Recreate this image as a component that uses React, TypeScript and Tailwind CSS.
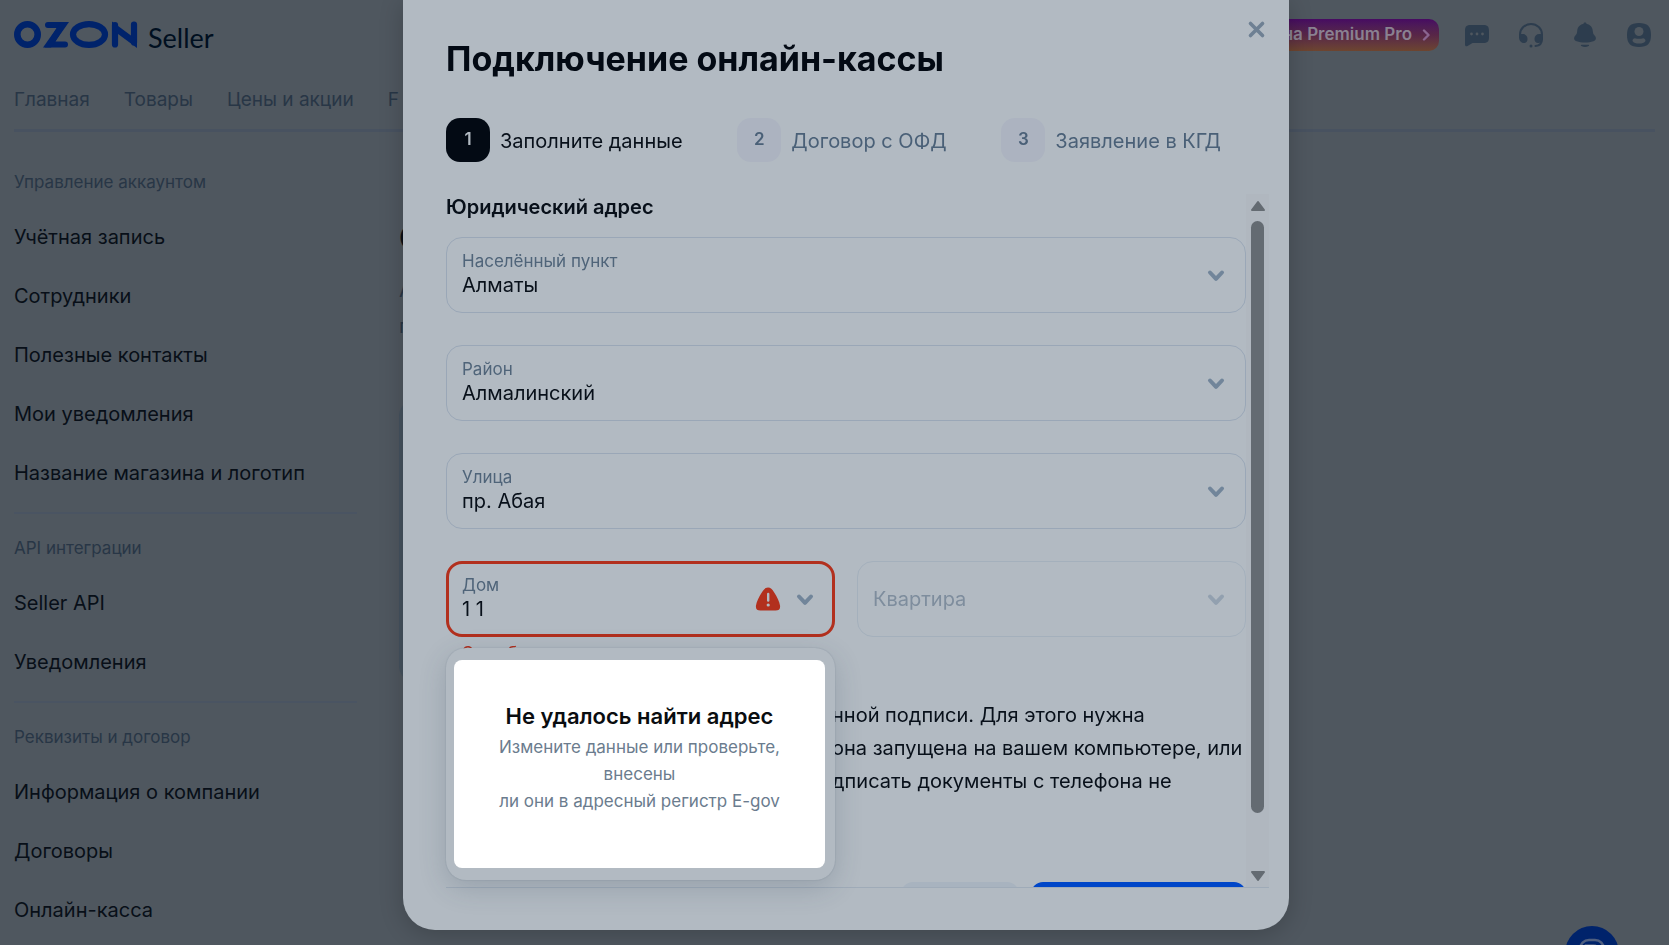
import { useId } from "react";
import type { ReactNode } from "react";

const menu = [
  {
    title: "Управление аккаунтом",
    items: ["Учётная запись", "Сотрудники", "Полезные контакты", "Мои уведомления", "Название магазина и логотип"],
  },
  { title: "API интеграции", items: ["Seller API", "Уведомления"] },
  { title: "Реквизиты и договор", items: ["Информация о компании", "Договоры", "Онлайн-касса"] },
];

function OzonLogo() {
  return (
    <svg width="124" height="28" viewBox="0 0 124 28" fill="none" stroke="#00236b" aria-label="OZON" role="img">
      <circle cx="13.5" cy="13.5" r="10.2" strokeWidth="6.6" />
      <path d="M34 4h14L36 23.6h15" strokeWidth="6" strokeLinecap="round" />
      <path d="M47 1h8L37 26.5h-8z" fill="#00236b" stroke="none" />
      <ellipse cx="75" cy="13.5" rx="16" ry="10.4" strokeWidth="6.2" />
      <path d="M101 4v19.5M120 3.5v18" strokeWidth="6.2" strokeLinecap="round" />
      <path d="M98 0.5l25 18.5v8L98 8.6z" fill="#00236b" stroke="none" />
    </svg>
  );
}

function Chevron({ muted = false }: { muted?: boolean }) {
  return (
    <svg className="mt-0.5 shrink-0" width="18" height="14" viewBox="0 0 18 14" fill="none" stroke={muted ? "#92a0af" : "#71859a"} strokeWidth="4" strokeLinecap="round" strokeLinejoin="round">
      <path d="M3 3.5l6 6.4 6-6.4" />
    </svg>
  );
}

function ChatIcon() {
  return (
    <svg width="26" height="26" viewBox="0 0 26 26">
      <path d="M7 3h12c4.500 0 6 1.500 6 6v6c0 4.500-1.500 6-6 6H8.500L3.500 24C2 24.700 1 24 1 22.500V9c0-4.500 1.500-6 6-6z" fill="#2d3d4e" />
      <g fill="#4f575f">
        <circle cx="7.500" cy="12" r="1.400" />
        <circle cx="13" cy="12" r="1.400" />
        <circle cx="18.500" cy="12" r="1.400" />
      </g>
    </svg>
  );
}

function HeadsetIcon() {
  return (
    <svg width="26" height="26" viewBox="0 0 26 26" fill="none">
      <path d="M2 14v-1.500a11 10.500 0 0 1 22 0V17c0 4-2.200 6.700-6.500 7" stroke="#2d3d4e" strokeWidth="2" strokeLinecap="round" />
      <path d="M1 12h3.500c3.200 0 5 2 5 5 0 2.500-1.500 4-3.500 4-3 0-5-2.500-5-6zM25 12h-3.500c-3.200 0-5 2-5 5 0 2.500 1.500 4 3.500 4 3 0 5-2.500 5-6z" fill="#2d3d4e" />
      <circle cx="13" cy="24" r="1.500" fill="#2d3d4e" />
    </svg>
  );
}

function BellIcon() {
  return (
    <svg width="26" height="26" viewBox="0 0 26 26" fill="#2d3d4e">
      <path d="M13 0.500c1 0 1.500.6 1.700 1.600C18.800 2.800 20.500 5.700 20.800 9.200c.2 2.300.8 3.200 2 4.500 1.900 2.200 1.300 4.500-1.500 5.600-2.300.9-5.200 1.300-8.300 1.300s-6-.4-8.300-1.300c-2.800-1.100-3.400-3.400-1.500-5.600 1.200-1.300 1.800-2.200 2-4.500.3-3.500 2-6.400 6.100-7.100C11.500 1.100 12 .5 13 .5z" />
      <path d="M9.500 22.800h7c.8 0 .8.900.1 1.300-2 1.200-5.200 1.200-7.200 0-.7-.4-.7-1.300.1-1.300z" />
    </svg>
  );
}

function UserIcon() {
  return (
    <svg width="26" height="26" viewBox="0 0 26 26">
      <path d="M13 1c8.500 0 12 3.500 12 12s-3.500 12-12 12S1 21.500 1 13 4.500 1 13 1z" fill="#2d3d4e" />
      <circle cx="13" cy="9.500" r="4.500" fill="#4f575f" />
      <path d="M6.500 19c0-1.800 1.500-3 3-2.600 2.300.6 4.700.6 7 0 1.500-.4 3 .8 3 2.600-1 1.800-3.600 2.600-6.500 2.600s-5.500-.8-6.500-2.600z" fill="#4f575f" />
    </svg>
  );
}

function WarningIcon() {
  return (
    <svg className="shrink-0" width="26" height="26" viewBox="0 0 26 26">
      <path d="M13 1.500c2.600 0 4.200 1.800 6.200 4.900C22 10.700 24.500 15.400 25 19.500c.5 3.400-1 5-4.500 5h-15c-3.500 0-5-1.600-4.500-5 .5-4.100 3-8.800 5.800-13.100 2-3.100 3.600-4.900 6.200-4.900z" fill="#b2301e" />
      <path d="M13.200 8v6.500" stroke="#b2bac2" strokeWidth="2.400" strokeLinecap="round" />
      <circle cx="13.200" cy="19" r="1.600" fill="#b2bac2" />
    </svg>
  );
}

function Field({ label, value }: { label: string; value: string }) {
  const id = useId();
  return (
    <div className="flex h-19 items-center rounded-2xl border border-[#9aa7b7] pr-5 pl-[15px]">
      <div className="flex min-w-0 flex-1 flex-col pb-1">
        <label htmlFor={id} className="text-[17px] leading-6 text-[#4f6479]">{label}</label>
        <select id={id} className="w-full appearance-none bg-transparent text-xl leading-6 text-[#08101a] outline-none">
          <option>{value}</option>
        </select>
      </div>
      <Chevron />
    </div>
  );
}

function Step({ n, active = false, children }: { n: number; active?: boolean; children: ReactNode }) {
  return (
    <li className={`flex items-center gap-2.5 ${active ? "text-[#08101a]" : "text-[#4a6077]"}`}>
      <span className={`flex size-11 items-center justify-center rounded-[14px] text-[17px] font-semibold ${active ? "bg-[#030a14] text-[#b2bac2]" : "bg-[#acb3c0]"}`}>{n}</span>
      <span className="pt-px whitespace-nowrap">{children}</span>
    </li>
  );
}

export default function App() {
  return (
    <div className="relative h-screen overflow-hidden bg-[#4f575f] font-['Inter',sans-serif] text-xl text-[#080f18]">
      <header className="mx-3.5 border-b-3 border-[#485260]">
        <div className="flex h-[70px] items-center justify-between">
          <a href="#" className="flex items-center gap-2.5">
            <OzonLogo />
            <span className="pt-1.5 font-['Lato',sans-serif] text-[27px] leading-8 text-[#000f20]">Seller</span>
          </a>
          <div className="flex items-center gap-[25px]">
            <button className="flex h-8 w-64 items-center justify-end gap-2.5 rounded-[10px] bg-linear-to-t from-[#6d452f] via-[#582647] to-[#470a62] pr-2 text-[17px] font-semibold whitespace-nowrap text-[#8a8191]">
              Подписка на Premium Pro
              <svg width="9" height="12" viewBox="0 0 9 12" fill="none" stroke="#8a6490" strokeWidth="2.400" strokeLinecap="round" strokeLinejoin="round">
                <path d="M2 1.500L6.500 6 2 10.500" />
              </svg>
            </button>
            <div className="flex items-center gap-7 pr-[3px]">
              <button aria-label="Чат"><ChatIcon /></button>
              <button aria-label="Поддержка"><HeadsetIcon /></button>
              <button aria-label="Уведомления"><BellIcon /></button>
              <button aria-label="Профиль"><UserIcon /></button>
            </div>
          </div>
        </div>
        <nav className="flex h-[59px] items-center gap-[34px] pt-0.5 text-[19px] text-[#283646]">
          <a href="#">Главная</a>
          <a href="#">Товары</a>
          <a href="#">Цены и акции</a>
          <a href="#">F</a>
        </nav>
      </header>

      <div className="flex">
        <aside className="ml-3.5 w-[343px] shrink-0 pt-[33px]">
          {menu.map((group, i) => (
            <section key={group.title} className={i < menu.length - 1 ? "mb-[17px] border-b-2 border-[#4a5462] pb-2.5" : ""}>
              <h2 className="flex h-9 items-center text-[17px] text-[#283646]">{group.title}</h2>
              <ul className="pt-1.5">
                {group.items.map((item) => (
                  <li key={item} className="flex h-[59px] items-center">
                    <a href="#">{item}</a>
                  </li>
                ))}
              </ul>
            </section>
          ))}
        </aside>
        <main className="flex-1 pt-[82px] pl-[42px]">
          <h1 className="text-[34px] leading-12 font-bold">О</h1>
          <p className="pt-2.5 leading-9 text-[#283646]">А<br />п</p>
          <div className="mt-14 h-[282px] w-1/2 rounded-2xl bg-[#45525e]" />
        </main>
      </div>

      <button aria-label="Помощник" className="fixed right-[50px] -bottom-[35px] flex size-[54px] items-start justify-center rounded-full bg-[#00236b] pt-3">
        <svg width="28" height="28" viewBox="0 0 28 28" fill="none" stroke="#4f5f80" strokeWidth="2.500">
          <rect x="2" y="2" width="24" height="24" rx="9" />
          <path d="M8 18V7.500h7c3.500 0 5 1.500 5 4.500" />
        </svg>
      </button>

      <div className="fixed inset-0 flex justify-center pb-[15px] pl-[23px]">
        <div role="dialog" aria-labelledby="dialog-title" className="relative flex h-full w-[886px] flex-col rounded-b-[32px] bg-[#b2bac2] pr-5 pb-[42px] pl-[43px] shadow-[0_4px_24px_rgba(0,0,0,0.2)]">
          <button aria-label="Закрыть" className="absolute top-5 right-[22px] flex size-5 items-center justify-center">
            <svg width="20" height="20" viewBox="0 0 20 20" stroke="#6e8093" strokeWidth="3.600" strokeLinecap="round">
              <path d="M3.500 3.500l12 12M15.500 3.500l-12 12" />
            </svg>
          </button>
          <h2 id="dialog-title" className="pt-9 text-[34px] leading-[46px] font-bold text-[#030a14]">Подключение онлайн-кассы</h2>
          <ol className="mt-9 mr-12 flex justify-between">
            <Step n={1} active>Заполните данные</Step>
            <Step n={2}>Договор с ОФД</Step>
            <Step n={3}>Заявление в КГД</Step>
          </ol>

          <div className="relative mt-8 flex min-h-0 flex-1 border-b border-[#9fabb8]">
            <div className="min-w-0 flex-1 overflow-hidden">
              <h3 className="mb-4 leading-[27px] font-semibold text-[#08101a]">Юридический адрес</h3>
              <form className="flex flex-col gap-8">
                <Field label="Населённый пункт" value="Алматы" />
                <Field label="Район" value="Алмалинский" />
                <Field label="Улица" value="пр. Абая" />
                <div className="grid grid-cols-2 gap-[22px]">
                  <div>
                    <div className="flex h-19 items-center rounded-2xl border-3 border-[#b2301e] pr-[18px] pl-[13px]">
                      <div className="flex min-w-0 flex-1 flex-col pb-1">
                        <label htmlFor="house" className="text-[17px] leading-6 text-[#4f6479]">Дом</label>
                        <input id="house" defaultValue="1 1" className="w-full bg-transparent leading-6 text-[#08101a] outline-none" />
                      </div>
                      <WarningIcon />
                      <span className="w-[15px]" />
                      <Chevron />
                    </div>
                    <p className="h-0 pt-1 pl-4 text-[17px] leading-6 text-[#b2301e]">Это обязательное поле</p>
                  </div>
                  <div className="flex h-19 items-center rounded-2xl border border-[#a4b0bc] pr-5 pl-[15px]">
                    <select aria-label="Квартира" disabled className="min-w-0 flex-1 appearance-none bg-transparent text-xl text-[#7e8d9d] opacity-100">
                      <option>Квартира</option>
                    </select>
                    <Chevron muted />
                  </div>
                </div>
                <p className="mt-[26px] pl-[386px] leading-[33px] whitespace-nowrap text-[#08101a]">
                  нной подписи. Для этого нужна<br />
                  она запущена на вашем компьютере, или<br />
                  дписать документы с телефона не
                </p>
                <div className="mt-13 flex justify-end gap-3">
                  <button type="button" aria-label="Отмена" className="h-12 w-[118px] rounded-xl bg-[#a8b3bf]" />
                  <button type="submit" aria-label="Продолжить" className="h-12 w-[215px] rounded-xl bg-[#0046c8]" />
                </div>
              </form>
            </div>
            <div className="flex w-[23px] flex-col items-center bg-[#b0b7bf] pt-1.5 pb-[5px]" aria-hidden="true">
              <svg width="16" height="12" viewBox="0 0 16 12" fill="#646b72" stroke="#646b72" strokeWidth="2" strokeLinejoin="round">
                <path d="M8 2l6 8H2z" />
              </svg>
              <div className="mt-[9px] w-[13px] flex-1 rounded-full bg-[#646b72]" />
              <div className="h-[57px]" />
              <svg width="16" height="12" viewBox="0 0 16 12" fill="#646b72" stroke="#646b72" strokeWidth="2" strokeLinejoin="round">
                <path d="M8 10l6-8H2z" />
              </svg>
            </div>
            <div role="status" className="absolute top-[454px] left-0 w-[389px] rounded-[20px] bg-[#b2bac2] px-2 py-3 shadow-[0_8px_28px_rgba(40,60,80,0.2),0_0_2px_rgba(40,60,80,0.2)]">
              <div className="mr-0.5 flex h-[208px] flex-col items-center rounded-lg bg-white px-9 pt-[38px] text-center">
                <p className="text-[22px] leading-9 font-semibold whitespace-nowrap text-[#0a0d10]">Не удалось найти адрес</p>
                <p className="text-[17px] leading-[27px] text-[#6b7c8e]">
                  Измените данные или проверьте, внесены<br />ли они в адресный регистр E-gov
                </p>
              </div>
            </div>
          </div>
        </div>
      </div>
    </div>
  );
}
